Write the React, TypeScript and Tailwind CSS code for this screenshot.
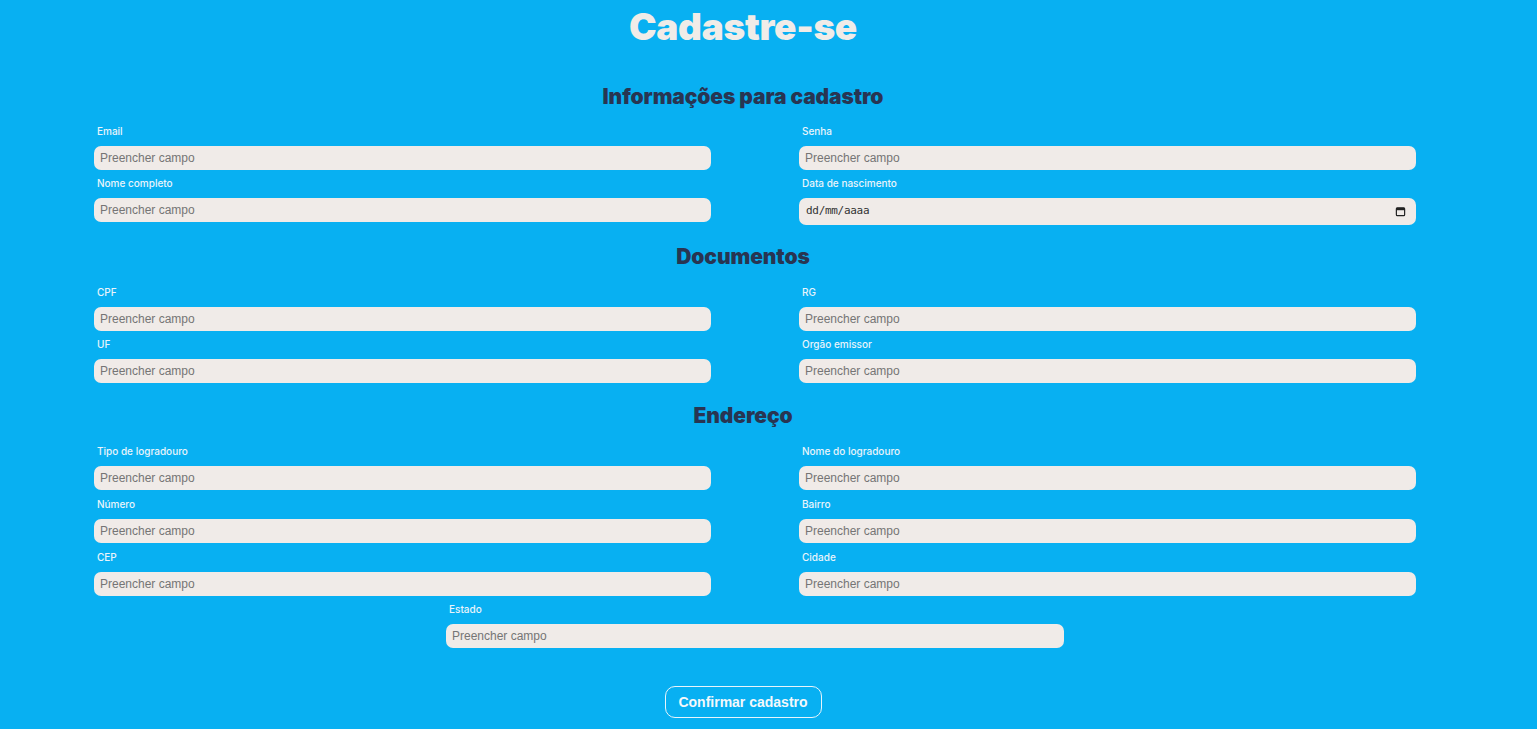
import type { ReactNode } from 'react';

const heading = "font-['Inter',sans-serif] font-black text-[21px] leading-[24px] text-[#283552] tracking-[-0.1px]";

function Field({ label, children }: { label: string; children?: ReactNode }) {
  return (
    <div className="flex flex-col">
      <label className="block h-[14px] pl-[3px] font-['Inter',sans-serif] font-medium text-[10px] leading-[14px] text-[#eaf4fb]">
        {label}
      </label>
      <div className="mt-[8px]">
        {children ?? (
          <input
            type="text"
            placeholder="Preencher campo"
            className="block w-full h-[24px] rounded-[7px] bg-[#f0ebe8] px-[6px] font-['Liberation_Sans',Arial,sans-serif] text-[12px] text-[#333] placeholder:text-[#757575] outline-none"
          />
        )}
      </div>
    </div>
  );
}

function DateInput() {
  return (
    <div className="w-full h-[27px] rounded-[7px] bg-[#f0ebe8] pl-[7px] pr-[10px] flex items-center justify-between">
      <span className="font-['DejaVu_Sans_Mono',monospace] text-[11px] text-[#333] tracking-[-0.3px]">dd/mm/aaaa</span>
      <svg width="11" height="11" viewBox="0 0 12 12" fill="none">
        <rect x="1.5" y="2" width="9" height="8.5" rx="1" stroke="#222" strokeWidth="1.3" />
        <rect x="1.5" y="2" width="9" height="2.6" fill="#222" />
      </svg>
    </div>
  );
}

function Grid({ children, className }: { children: ReactNode; className?: string }) {
  return (
    <div className={`ml-[94px] w-[1322px] grid grid-cols-2 gap-x-[88px] gap-y-[6px] ${className ?? ''}`}>
      {children}
    </div>
  );
}

export default function App() {
  return (
    <div className="min-h-screen w-full bg-[#08b0f2] pb-[12px]">
      <div className="w-[1486px] flex flex-col">
        <h1 className="mt-[6px] text-center font-['Inter',sans-serif] font-black text-[37px] leading-[42px] text-[#f0ece8] tracking-[-0.3px]">
          Cadastre-se
        </h1>

        <h2 className={`mt-[37px] text-center ${heading}`}>Informações para cadastro</h2>
        <Grid className="mt-[15px]">
          <Field label="Email" />
          <Field label="Senha" />
          <Field label="Nome completo" />
          <Field label="Data de nascimento">
            <DateInput />
          </Field>
        </Grid>

        <h2 className={`mt-[20px] text-center ${heading}`}>Documentos</h2>
        <Grid className="mt-[16px]">
          <Field label="CPF" />
          <Field label="RG" />
          <Field label="UF" />
          <Field label="Orgão emissor" />
        </Grid>

        <h2 className={`mt-[21px] text-center ${heading}`}>Endereço</h2>
        <Grid className="mt-[16px] gap-y-[7px]">
          <Field label="Tipo de logradouro" />
          <Field label="Nome do logradouro" />
          <Field label="Número" />
          <Field label="Bairro" />
          <Field label="CEP" />
          <Field label="Cidade" />
        </Grid>
        <div className="ml-[446px] w-[618px] mt-[6px]">
          <Field label="Estado" />
        </div>

        <div className="mt-[38px] flex justify-center">
          <button className="w-[157px] h-[32px] rounded-[10px] border border-[#e8f4fb] bg-transparent font-['Liberation_Sans',Arial,sans-serif] font-bold text-[14px] text-[#f4f8fb]">
            Confirmar cadastro
          </button>
        </div>
      </div>
    </div>
  );
}
